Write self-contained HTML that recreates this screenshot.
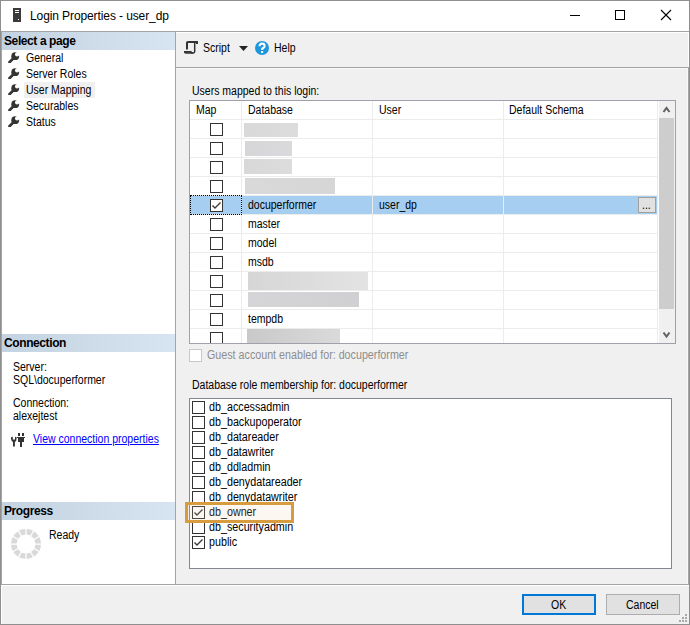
<!DOCTYPE html>
<html><head><meta charset="utf-8">
<style>
*{margin:0;padding:0;box-sizing:border-box}
html,body{width:690px;height:625px;overflow:hidden;background:#fff}
body{position:relative;font-family:"Liberation Sans",sans-serif;color:#000}
.a{position:absolute}
.t{position:absolute;white-space:pre;font-size:12px;line-height:14px;color:#000;transform:scaleX(0.875);transform-origin:0 0}
.hb{position:absolute;white-space:pre;font-size:12px;font-weight:bold;letter-spacing:-0.4px;line-height:14px;color:#000}
</style></head><body>

<div class="a" style="left:0;top:0;width:690px;height:625px;border:1px solid #8f8f8f;background:#fff"></div>
<svg class="a" style="left:13px;top:8px" width="8" height="14" viewBox="0 0 8 14">
 <rect x="0" y="0" width="8" height="14" fill="#3a3a3a"/>
 <rect x="2" y="2" width="4" height="1" fill="#fff"/>
 <rect x="2" y="4" width="4" height="1" fill="#fff"/>
 <rect x="5" y="11" width="1" height="1" fill="#fff"/>
</svg>
<div class="a" style="left:30px;top:9px;font-size:12px;letter-spacing:-0.1px;line-height:14px;white-space:pre">Login Properties - user_dp</div>
<div class="a" style="left:570px;top:15px;width:10px;height:1px;background:#000"></div>
<div class="a" style="left:615px;top:10px;width:10px;height:10px;border:1px solid #000"></div>
<svg class="a" style="left:660px;top:9px" width="12" height="12" viewBox="0 0 12 12"><path d="M1 1L11 11M11 1L1 11" stroke="#000" stroke-width="1.1"/></svg>
<div class="a" style="left:1px;top:31px;width:688px;height:554px;border:1px solid #a3a3a8;background:#f0f0f0"></div>
<div class="a" style="left:2px;top:32px;width:173px;height:552px;background:#fff"></div>
<div class="a" style="left:175px;top:32px;width:1px;height:552px;background:#a3a3a8"></div>
<div class="a" style="left:2px;top:32px;width:173px;height:18px;background:linear-gradient(to right,#c4d3e1,#d7e4f1)"></div>
<div class="hb" style="left:4px;top:34px">Select a page</div>
<div class="a" style="left:24px;top:82px;width:71px;height:16px;background:#f0f0f0"></div>
<svg class="a" style="left:8px;top:52px" width="12" height="11" viewBox="0 0 12 11"><path d="M1.5 10.2L5.6 6.1" stroke="#333" stroke-width="2.7" stroke-linecap="round"/><circle cx="7.2" cy="4.2" r="3.9" fill="#333"/><circle cx="9.1" cy="2.4" r="2.1" fill="#fff"/><path d="M8.4 1.2L11.5 -2L13 3.4Z" fill="#fff"/></svg>
<div class="t" style="left:26px;top:51px">General</div>
<svg class="a" style="left:8px;top:68px" width="12" height="11" viewBox="0 0 12 11"><path d="M1.5 10.2L5.6 6.1" stroke="#333" stroke-width="2.7" stroke-linecap="round"/><circle cx="7.2" cy="4.2" r="3.9" fill="#333"/><circle cx="9.1" cy="2.4" r="2.1" fill="#fff"/><path d="M8.4 1.2L11.5 -2L13 3.4Z" fill="#fff"/></svg>
<div class="t" style="left:26px;top:67px">Server Roles</div>
<svg class="a" style="left:8px;top:84px" width="12" height="11" viewBox="0 0 12 11"><path d="M1.5 10.2L5.6 6.1" stroke="#333" stroke-width="2.7" stroke-linecap="round"/><circle cx="7.2" cy="4.2" r="3.9" fill="#333"/><circle cx="9.1" cy="2.4" r="2.1" fill="#fff"/><path d="M8.4 1.2L11.5 -2L13 3.4Z" fill="#fff"/></svg>
<div class="t" style="left:26px;top:83px">User Mapping</div>
<svg class="a" style="left:8px;top:100px" width="12" height="11" viewBox="0 0 12 11"><path d="M1.5 10.2L5.6 6.1" stroke="#333" stroke-width="2.7" stroke-linecap="round"/><circle cx="7.2" cy="4.2" r="3.9" fill="#333"/><circle cx="9.1" cy="2.4" r="2.1" fill="#fff"/><path d="M8.4 1.2L11.5 -2L13 3.4Z" fill="#fff"/></svg>
<div class="t" style="left:26px;top:99px">Securables</div>
<svg class="a" style="left:8px;top:116px" width="12" height="11" viewBox="0 0 12 11"><path d="M1.5 10.2L5.6 6.1" stroke="#333" stroke-width="2.7" stroke-linecap="round"/><circle cx="7.2" cy="4.2" r="3.9" fill="#333"/><circle cx="9.1" cy="2.4" r="2.1" fill="#fff"/><path d="M8.4 1.2L11.5 -2L13 3.4Z" fill="#fff"/></svg>
<div class="t" style="left:26px;top:115px">Status</div>
<div class="a" style="left:2px;top:334px;width:173px;height:18px;background:linear-gradient(to right,#c4d3e1,#d7e4f1)"></div>
<div class="hb" style="left:4px;top:336px">Connection</div>
<div class="t" style="left:13px;top:360px">Server:</div>
<div class="t" style="left:13px;top:373px">SQL\docuperformer</div>
<div class="t" style="left:13px;top:396px">Connection:</div>
<div class="t" style="left:13px;top:409px">alexejtest</div>
<svg class="a" style="left:11px;top:433px" width="15" height="15" viewBox="0 0 15 15">
<path d="M0 4.3L1.8 3.8V6.4H4V3.8L5.6 4.3Q5.9 8 3.9 8.9V13.6H2V8.9Q-0.3 8 0 4.3Z" fill="#333"/>
<rect x="7" y="0" width="2" height="3" fill="#333"/><rect x="11" y="0" width="2" height="3" fill="#333"/>
<rect x="6" y="4" width="8" height="1" fill="#333"/><rect x="7" y="5" width="6" height="4" fill="#333"/><rect x="9" y="9" width="2" height="5" fill="#333"/>
</svg>
<div class="t" style="left:33px;top:432px;color:#0000ff;text-decoration:underline">View connection properties</div>
<div class="a" style="left:2px;top:502px;width:173px;height:18px;background:linear-gradient(to right,#c4d3e1,#d7e4f1)"></div>
<div class="hb" style="left:4px;top:504px">Progress</div>
<svg class="a" style="left:10px;top:528px" width="32" height="32" viewBox="0 0 32 32">
 <circle cx="16" cy="16" r="12.2" fill="none" stroke="#d9d9d9" stroke-width="5.6"/>
 <g stroke="#fff" stroke-width="1.25">
  <path d="M16 0V32M0 16H32M16 16L24 2.14M16 16L29.86 8M16 16L29.86 24M16 16L24 29.86M16 16L8 29.86M16 16L2.14 24M16 16L2.14 8M16 16L8 2.14"/>
 </g>
</svg>
<div class="t" style="left:49px;top:528px">Ready</div>
<div class="a" style="left:176px;top:32px;width:512px;height:1px;background:#fff"></div>
<div class="a" style="left:688px;top:32px;width:1px;height:35px;background:#fff"></div>
<div class="a" style="left:687px;top:68px;width:1px;height:516px;background:#f8f8f8"></div>
<div class="a" style="left:176px;top:67px;width:513px;height:1px;background:#a3a3a8"></div>
<div class="a" style="left:176px;top:68px;width:511px;height:1px;background:#f8f8f8"></div>
<svg class="a" style="left:180px;top:38px" width="22" height="19" viewBox="0 0 22 19">
<path d="M7 11.6V4.6Q7 4 8 4H17.6" fill="none" stroke="#333" stroke-width="2"/><rect x="16" y="3" width="2" height="3" fill="#333"/>
<path d="M14.7 5V13.6Q14.7 15 13.4 15H6.2Q5 15 4.8 14" fill="none" stroke="#333" stroke-width="1.5"/>
<path d="M4 13.9H10.8Q11.4 15.2 12.8 15.2" fill="none" stroke="#333" stroke-width="1.7"/>
</svg>
<div class="t" style="left:203px;top:41px">Script</div>
<svg class="a" style="left:239px;top:46px" width="9" height="5" viewBox="0 0 9 5"><path d="M0 0H9L4.5 5Z" fill="#222"/></svg>
<svg class="a" style="left:255px;top:41px" width="14" height="14" viewBox="0 0 14 14"><circle cx="7" cy="7" r="7" fill="#1c97dd"/><path d="M4.6 5.2Q4.6 2.6 7.1 2.6Q9.6 2.6 9.6 4.9Q9.6 6.3 8.2 7Q7.1 7.6 7.1 8.6V9" fill="none" stroke="#fff" stroke-width="2.1"/><rect x="6" y="10" width="2.2" height="2" fill="#fff"/></svg>
<div class="t" style="left:274px;top:41px">Help</div>
<div class="t" style="left:192px;top:84px">Users mapped to this login:</div>
<div class="a" style="left:189px;top:100px;width:487px;height:244px;border:1px solid #a0a0a8;background:#fff;overflow:hidden">
<div class="a" style="left:0;top:95px;width:467px;height:18px;background:#a6cef0"></div>
<div class="a" style="left:51px;top:0;width:1px;height:242px;background:#ececec"></div>
<div class="a" style="left:182px;top:0;width:1px;height:242px;background:#ececec"></div>
<div class="a" style="left:313px;top:0;width:1px;height:242px;background:#ececec"></div>
<div class="a" style="left:0;top:18px;width:468px;height:1px;background:#ececec"></div>
<div class="a" style="left:0;top:37px;width:468px;height:1px;background:#ececec"></div>
<div class="a" style="left:0;top:56px;width:468px;height:1px;background:#ececec"></div>
<div class="a" style="left:0;top:75px;width:468px;height:1px;background:#ececec"></div>
<div class="a" style="left:0;top:94px;width:468px;height:1px;background:#ececec"></div>
<div class="a" style="left:0;top:113px;width:468px;height:1px;background:#ececec"></div>
<div class="a" style="left:0;top:132px;width:468px;height:1px;background:#ececec"></div>
<div class="a" style="left:0;top:151px;width:468px;height:1px;background:#ececec"></div>
<div class="a" style="left:0;top:170px;width:468px;height:1px;background:#ececec"></div>
<div class="a" style="left:0;top:189px;width:468px;height:1px;background:#ececec"></div>
<div class="a" style="left:0;top:208px;width:468px;height:1px;background:#ececec"></div>
<div class="a" style="left:0;top:227px;width:468px;height:1px;background:#ececec"></div>
<div class="a" style="left:467px;top:0;width:1px;height:242px;background:#ececec"></div>
<div class="t" style="left:6px;top:2px">Map</div>
<div class="t" style="left:58px;top:2px">Database</div>
<div class="t" style="left:189px;top:2px">User</div>
<div class="t" style="left:319px;top:2px">Default Schema</div>
<div class="a" style="left:0;top:94px;width:52px;height:20px;border:1px dotted #000"></div>
<svg class="a" style="left:20px;top:22px" width="13" height="13" viewBox="0 0 13 13"><rect x="0.5" y="0.5" width="12" height="12" fill="#fff" stroke="#333"/></svg>
<div class="a" style="left:54px;top:22px;width:54px;height:14px;background:linear-gradient(to right,#d9d9d9,#dcdcdc)"></div>
<svg class="a" style="left:20px;top:41px" width="13" height="13" viewBox="0 0 13 13"><rect x="0.5" y="0.5" width="12" height="12" fill="#fff" stroke="#333"/></svg>
<div class="a" style="left:55px;top:40px;width:47px;height:15px;background:linear-gradient(to right,#d6d6d8,#dadadc)"></div>
<svg class="a" style="left:20px;top:60px" width="13" height="13" viewBox="0 0 13 13"><rect x="0.5" y="0.5" width="12" height="12" fill="#fff" stroke="#333"/></svg>
<div class="a" style="left:54px;top:58px;width:48px;height:15px;background:linear-gradient(to right,#d8d8d8,#dcdcdc)"></div>
<svg class="a" style="left:20px;top:79px" width="13" height="13" viewBox="0 0 13 13"><rect x="0.5" y="0.5" width="12" height="12" fill="#fff" stroke="#333"/></svg>
<div class="a" style="left:55px;top:77px;width:90px;height:16px;background:linear-gradient(to right,#d9d9d9,#d6d6d6)"></div>
<svg class="a" style="left:20px;top:98px" width="13" height="13" viewBox="0 0 13 13"><rect x="0.5" y="0.5" width="12" height="12" fill="#fff" stroke="#333"/><path d="M2.5 6.5L5 9L10.5 3.5" fill="none" stroke="#3a3a3a" stroke-width="1.4"/></svg>
<div class="t" style="left:58px;top:97px">docuperformer</div>
<svg class="a" style="left:20px;top:117px" width="13" height="13" viewBox="0 0 13 13"><rect x="0.5" y="0.5" width="12" height="12" fill="#fff" stroke="#333"/></svg>
<div class="t" style="left:58px;top:116px">master</div>
<svg class="a" style="left:20px;top:136px" width="13" height="13" viewBox="0 0 13 13"><rect x="0.5" y="0.5" width="12" height="12" fill="#fff" stroke="#333"/></svg>
<div class="t" style="left:58px;top:135px">model</div>
<svg class="a" style="left:20px;top:155px" width="13" height="13" viewBox="0 0 13 13"><rect x="0.5" y="0.5" width="12" height="12" fill="#fff" stroke="#333"/></svg>
<div class="t" style="left:58px;top:154px">msdb</div>
<svg class="a" style="left:20px;top:174px" width="13" height="13" viewBox="0 0 13 13"><rect x="0.5" y="0.5" width="12" height="12" fill="#fff" stroke="#333"/></svg>
<div class="a" style="left:58px;top:171px;width:120px;height:18px;background:linear-gradient(to right,#d6d6d6,#e3e3e3)"></div>
<svg class="a" style="left:20px;top:193px" width="13" height="13" viewBox="0 0 13 13"><rect x="0.5" y="0.5" width="12" height="12" fill="#fff" stroke="#333"/></svg>
<div class="a" style="left:58px;top:191px;width:111px;height:15px;background:linear-gradient(to right,#d5d5d7,#d0d0d2)"></div>
<svg class="a" style="left:20px;top:212px" width="13" height="13" viewBox="0 0 13 13"><rect x="0.5" y="0.5" width="12" height="12" fill="#fff" stroke="#333"/></svg>
<div class="t" style="left:58px;top:211px">tempdb</div>
<svg class="a" style="left:20px;top:231px" width="13" height="13" viewBox="0 0 13 13"><rect x="0.5" y="0.5" width="12" height="12" fill="#fff" stroke="#333"/></svg>
<div class="a" style="left:57px;top:228px;width:93px;height:14px;background:linear-gradient(to right,#c9c9c9,#dadada)"></div>
<div class="t" style="left:189px;top:97px">user_dp</div>
<div class="a" style="left:448px;top:96px;width:18px;height:16px;border:1px solid #a0a0a0;background:#e1e1e1"></div>
<div class="t" style="left:452px;top:97px">...</div>
<div class="a" style="left:469px;top:0;width:16px;height:242px;background:#f0f0f0"></div>
<div class="a" style="left:469px;top:17px;width:15px;height:191px;background:#cdcdcd"></div>
<svg class="a" style="left:472px;top:4px" width="9" height="9" viewBox="0 0 9 9"><path d="M1.5 7L4.5 3L7.5 7" fill="none" stroke="#606060" stroke-width="2"/></svg>
<svg class="a" style="left:472px;top:229px" width="9" height="9" viewBox="0 0 9 9"><path d="M1.5 2.5L4.5 6.5L7.5 2.5" fill="none" stroke="#606060" stroke-width="2"/></svg>
</div>
<svg class="a" style="left:189px;top:349px" width="13" height="13" viewBox="0 0 13 13"><rect x="0.5" y="0.5" width="12" height="12" fill="#fff" stroke="#c8c8c8"/></svg>
<div class="t" style="left:207px;top:348px;color:#8d8d8d;transform:scaleX(0.893)">Guest account enabled for: docuperformer</div>
<div class="t" style="left:192px;top:378px">Database role membership for: docuperformer</div>
<div class="a" style="left:189px;top:398px;width:483px;height:171px;border:1px solid #828790;background:#fff"></div>
<svg class="a" style="left:192px;top:401px" width="13" height="13" viewBox="0 0 13 13"><rect x="0.5" y="0.5" width="12" height="12" fill="#fff" stroke="#333"/></svg>
<div class="t" style="left:209px;top:400px;transform:scaleX(0.895)">db_accessadmin</div>
<svg class="a" style="left:192px;top:416px" width="13" height="13" viewBox="0 0 13 13"><rect x="0.5" y="0.5" width="12" height="12" fill="#fff" stroke="#333"/></svg>
<div class="t" style="left:209px;top:415px;transform:scaleX(0.895)">db_backupoperator</div>
<svg class="a" style="left:192px;top:431px" width="13" height="13" viewBox="0 0 13 13"><rect x="0.5" y="0.5" width="12" height="12" fill="#fff" stroke="#333"/></svg>
<div class="t" style="left:209px;top:430px;transform:scaleX(0.895)">db_datareader</div>
<svg class="a" style="left:192px;top:446px" width="13" height="13" viewBox="0 0 13 13"><rect x="0.5" y="0.5" width="12" height="12" fill="#fff" stroke="#333"/></svg>
<div class="t" style="left:209px;top:445px;transform:scaleX(0.895)">db_datawriter</div>
<svg class="a" style="left:192px;top:461px" width="13" height="13" viewBox="0 0 13 13"><rect x="0.5" y="0.5" width="12" height="12" fill="#fff" stroke="#333"/></svg>
<div class="t" style="left:209px;top:460px;transform:scaleX(0.895)">db_ddladmin</div>
<svg class="a" style="left:192px;top:476px" width="13" height="13" viewBox="0 0 13 13"><rect x="0.5" y="0.5" width="12" height="12" fill="#fff" stroke="#333"/></svg>
<div class="t" style="left:209px;top:475px;transform:scaleX(0.895)">db_denydatareader</div>
<svg class="a" style="left:192px;top:491px" width="13" height="13" viewBox="0 0 13 13"><rect x="0.5" y="0.5" width="12" height="12" fill="#fff" stroke="#333"/></svg>
<div class="t" style="left:209px;top:490px;transform:scaleX(0.895)">db_denydatawriter</div>
<svg class="a" style="left:192px;top:506px" width="13" height="13" viewBox="0 0 13 13"><rect x="0.5" y="0.5" width="12" height="12" fill="#fff" stroke="#333"/><path d="M2.5 6.5L5 9L10.5 3.5" fill="none" stroke="#3a3a3a" stroke-width="1.4"/></svg>
<div class="t" style="left:209px;top:505px;transform:scaleX(0.895)">db_owner</div>
<svg class="a" style="left:192px;top:521px" width="13" height="13" viewBox="0 0 13 13"><rect x="0.5" y="0.5" width="12" height="12" fill="#fff" stroke="#333"/></svg>
<div class="t" style="left:209px;top:520px;transform:scaleX(0.895)">db_securityadmin</div>
<svg class="a" style="left:192px;top:536px" width="13" height="13" viewBox="0 0 13 13"><rect x="0.5" y="0.5" width="12" height="12" fill="#fff" stroke="#333"/><path d="M2.5 6.5L5 9L10.5 3.5" fill="none" stroke="#3a3a3a" stroke-width="1.4"/></svg>
<div class="t" style="left:209px;top:535px;transform:scaleX(0.895)">public</div>
<div class="a" style="left:185px;top:502px;width:109px;height:21px;border:3px solid #d69c3e;background:rgba(240,200,160,0.15)"></div>
<div class="a" style="left:1px;top:585px;width:688px;height:39px;background:#f0f0f0;border-top:1px solid #fff;border-left:1px solid #fff"></div>
<div class="a" style="left:522px;top:594px;width:74px;height:21px;border:2px solid #0078d7;background:#e1e1e1"></div>
<div class="t" style="left:551px;top:598px">OK</div>
<div class="a" style="left:606px;top:594px;width:74px;height:21px;border:1px solid #adadad;background:#e1e1e1"></div>
<div class="t" style="left:626px;top:598px">Cancel</div>
<div class="a" style="left:685px;top:614px;width:2px;height:2px;background:#a9a9a9"></div>
<div class="a" style="left:682px;top:617px;width:2px;height:2px;background:#a9a9a9"></div>
<div class="a" style="left:685px;top:617px;width:2px;height:2px;background:#a9a9a9"></div>
<div class="a" style="left:679px;top:620px;width:2px;height:2px;background:#a9a9a9"></div>
<div class="a" style="left:682px;top:620px;width:2px;height:2px;background:#a9a9a9"></div>
<div class="a" style="left:685px;top:620px;width:2px;height:2px;background:#a9a9a9"></div>
</body></html>
